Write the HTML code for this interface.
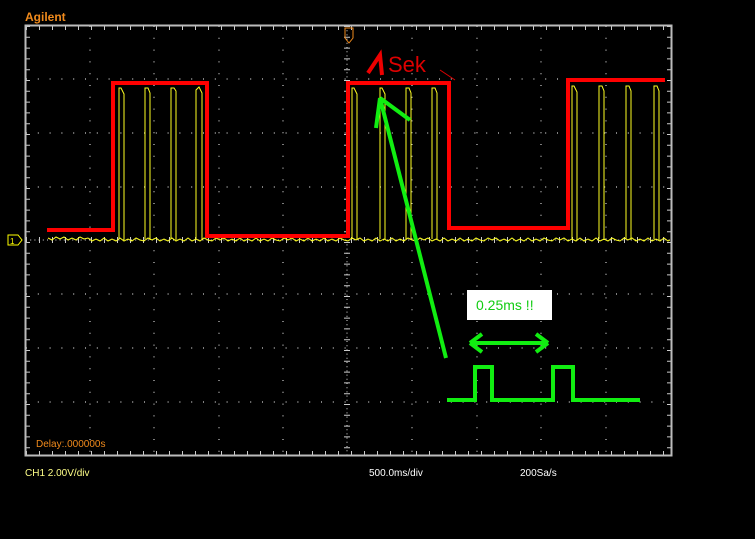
<!DOCTYPE html>
<html><head><style>
html,body{margin:0;padding:0;background:#000;width:755px;height:539px;overflow:hidden}
svg{display:block}
text{font-family:"Liberation Sans",sans-serif}
</style></head><body>
<svg width="755" height="539" viewBox="0 0 755 539" xmlns="http://www.w3.org/2000/svg">
<defs><clipPath id="c"><rect x="26" y="26" width="644" height="429"/></clipPath></defs>
<rect width="755" height="539" fill="#000"/>
<text x="25" y="21" fill="#f08a1c" font-size="12" font-weight="bold">Agilent</text>
<g stroke="#ccc" stroke-width="1.2" stroke-dasharray="1,10.8" fill="none">
<path d="M90 26V455M154 26V455M219 26V455M283 26V455M412 26V455M477 26V455M541 26V455M606 26V455"/>
<path d="M26 79H671M26 133H671M26 187H671M26 294H671M26 348H671M26 402H671"/>
</g>
<g stroke="#ddd" stroke-width="1" fill="none">
<path d="M347 26V455" stroke-dasharray="1,3.2"/><path d="M26 240H671" stroke-dasharray="1,3.2"/>
</g>
<path d="M26 28H671M26 453H671" stroke="#ccc" stroke-width="4" stroke-dasharray="1,12" fill="none"/>
<path d="M28 26V455M669 26V455" stroke="#ccc" stroke-width="4" stroke-dasharray="1,9.8" fill="none"/>
<path d="M347 26V455" stroke="#ccc" stroke-width="6" stroke-dasharray="1,9.8" fill="none"/>
<path d="M26 240H671" stroke="#ccc" stroke-width="6" stroke-dasharray="1,12" fill="none"/>
<rect x="25.5" y="25.5" width="646" height="430" fill="none" stroke="#bbb" stroke-width="2"/>
<path d="M8 235h10l4 5-4 5H8z" fill="none" stroke="#ff0" stroke-width="1"/>
<text x="10" y="244" fill="#ff0" font-size="8">1</text>
<path d="M345 28h8v10l-4 5-4-5z" fill="none" stroke="#f08a1c" stroke-width="1"/>
<g clip-path="url(#c)">
<g stroke="#ff2" stroke-width="1" fill="none">
<path d="M119 239V88h2l3 6V240M145 239V88h3l2 5V240M171 239V88h3l2 3V240M196 239V90l3-3 3 6V240"/>
<path d="M352 239V88h2l3 6V240M380 239V88h2l3 6V240M406 239V88h3l2 5V240M432 239V88h3l2 5V240"/>
<path d="M572 239V86h2l3 6V240M599 239V86h3l2 5V240M626 239V86h3l2 5V240M654 239V86h3l2 5V240"/>
<path d="M48 238l4 2 4-3 4 2 4-2 4 3 4-2 4 2 4-3 4 2 4-1 4 3 4-2 4 2 4-3 4 3 4-2 4 2 4-3 4 3 4-2 4 2 4-3 4 2 4 1 4-3 4 2 4-2 4 3 4-2 4 2 4-3 4 3 4-2 4 2 4-3 4 3 4-2 4 2 4-3 4 2 4 1 4-3 4 2 4-2 4 3 4-2 4 2 4-3 4 3 4-2 4 2 4-3 4 3 4-2 4 2 4-3 4 2 4 1 4-3 4 2 4-2 4 3 4-2 4 2 4-3 4 3 4-2 4 2 4-3 4 3 4-2 4 2 4-3 4 2 4 1 4-3 4 2 4-2 4 3 4-2 4 2 4-3 4 3 4-2 4 2 4-3 4 3 4-2 4 2 4-3 4 2 4 1 4-3 4 2 4-2 4 3 4-2 4 2 4-3 4 3 4-2 4 2 4-3 4 3 4-2 4 2 4-3 4 2 4 1 4-3 4 2 4-2 4 3 4-2 4 2 4-3 4 3 4-2 4 2 4-3 4 3 4-2 4 2 4-3 4 2 4 1 4-3 4 2 4-2 4 3 4-2 4 2 4-3 4 3 4-2 4 2 4-3 4 3 4-2 4 2 4-3 4 2 4 1 4-3 4 2 4-2 4 3 4-2 4 2 4-3 4 3 4-2 4 2 4-3 4 3 4-2 4 2 4-3 4 2 4 1 4-3 4 2 4-2 4 3 4-2 4 2"/>
</g>
</g>
<path d="M47 230H113V83H207V236H348V83H449V228H568V80H665" fill="none" stroke="#f00" stroke-width="4"/>
<path d="M368 73l12-18 2 20" fill="none" stroke="#e00" stroke-width="4"/>
<text x="388" y="72" fill="#d00" font-size="22" font-family="Liberation Sans">Sek</text>
<path d="M440 70l15 10" stroke="#d00" stroke-width="1"/>
<g stroke="#1e1" stroke-width="4" fill="none">
<path d="M446 358L380 98M380 98l30 22M380 98l-4 30"/>
<path d="M470 343H548M470 343l12-9M470 343l12 9M548 343l-12-9M548 343l-12 9"/>
<path d="M447 400H475V367H492V400H553V367H573V400H640"/>
</g>
<rect x="467" y="290" width="85" height="30" fill="#fff"/>
<text x="476" y="310" fill="#1c1" font-size="14">0.25ms !!</text>
<text x="36" y="447" fill="#f08a1c" font-size="10">Delay:.000000s</text>
<text x="25" y="476" fill="#ff8" font-size="10">CH1 2.00V/div</text>
<text x="369" y="476" fill="#fff" font-size="10">500.0ms/div</text>
<text x="520" y="476" fill="#fff" font-size="10">200Sa/s</text>
</svg>
</body></html>
